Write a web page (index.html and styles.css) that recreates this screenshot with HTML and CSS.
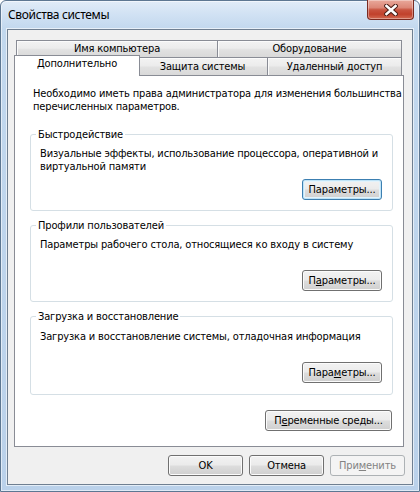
FILE: index.html
```html
<!DOCTYPE html>
<html lang="ru">
<head>
<meta charset="utf-8">
<title>Свойства системы</title>
<link rel="stylesheet" href="styles.css">
</head>
<body>
<div class="window">
  <div class="titlebar">
    <span class="title">Свойства системы</span>
    <button class="close" aria-label="Закрыть">
      <svg width="14" height="12" viewBox="0 0 14 12">
        <path d="M2.5 2 L11.5 10 M11.5 2 L2.5 10" stroke="#4a1d16" stroke-width="4.6" stroke-linecap="square" fill="none"/>
        <path d="M2.5 2 L11.5 10 M11.5 2 L2.5 10" stroke="#ffffff" stroke-width="2.6" stroke-linecap="square" fill="none"/>
      </svg>
    </button>
  </div>
  <div class="client">
    <div class="tabs">
      <div class="tabrow back">
        <div class="tab t1">Имя компьютера</div>
        <div class="tab t2">Оборудование</div>
      </div>
      <div class="tabrow front">
        <div class="tab sel">Дополнительно</div>
        <div class="tab t4">Защита системы</div>
        <div class="tab t5">Удаленный доступ</div>
      </div>
      <div class="panel">
        <p class="intro">Необходимо иметь права администратора для изменения большинства<br>перечисленных параметров.</p>
        <fieldset class="group first">
          <legend>Быстродействие</legend>
          <p class="desc">Визуальные эффекты, использование процессора, оперативной и<br>виртуальной памяти</p>
          <div class="btnrow"><button class="btn default">Параметры...</button></div>
        </fieldset>
        <fieldset class="group">
          <legend>Профили пользователей</legend>
          <p class="desc">Параметры рабочего стола, относящиеся ко входу в систему</p>
          <div class="btnrow"><button class="btn">П<u>а</u>раметры...</button></div>
        </fieldset>
        <fieldset class="group third">
          <legend>Загрузка и восстановление</legend>
          <p class="desc">Загрузка и восстановление системы, отладочная информация</p>
          <div class="btnrow"><button class="btn">Пара<u>м</u>етры...</button></div>
        </fieldset>
        <div class="btnrow env"><button class="btn wide">П<u>е</u>ременные среды...</button></div>
      </div>
    </div>
    <div class="dlgbuttons">
      <button class="btn dlg">OK</button>
      <button class="btn dlg">Отмена</button>
      <button class="btn dlg disabled">При<u>м</u>енить</button>
    </div>
  </div>
</div>
</body>
</html>
```
FILE: styles.css
```css
* { box-sizing: border-box; }

html, body {
  margin: 0;
  width: 420px;
  height: 492px;
  overflow: hidden;
  background: #ffffff;
}

body {
  font-family: "DejaVu Sans Condensed", "DejaVu Sans", sans-serif;
  font-size: 11px;
  line-height: 13px;
  letter-spacing: -0.15px;
  color: #000;
}

.window {
  width: 420px;
  height: 492px;
  display: flex;
  flex-direction: column;
  padding: 0 6px 6px 6px;
  border: 1px solid #5d7792;
  border-radius: 6px 6px 0 0;
  background: linear-gradient(180deg, #e1ecf8 0px, #d0e1f3 14px, #c2d8ee 28px, #bad1ea 100%);
  box-shadow: inset 0 0 0 1px rgba(255,255,255,0.55);
}

.titlebar {
  height: 28px;
  display: flex;
  justify-content: space-between;
  align-items: flex-start;
  flex: none;
}

.title {
  font-family: "Noto Sans", "Open Sans", sans-serif;
  font-size: 12px;
  line-height: 16px;
  letter-spacing: -0.35px;
  margin: 6px 0 0 1px;
  color: #000;
}

.close {
  width: 47px;
  height: 20px;
  margin: -1px -1px 0 0;
  padding: 0;
  display: flex;
  align-items: center;
  justify-content: center;
  border: 1px solid #7a2a20;
  border-top: none;
  border-radius: 0 0 4px 4px;
  background: linear-gradient(180deg, #e9a99b 0%, #dc8777 40%, #c8533f 52%, #c1412c 75%, #d26a52 100%);
  box-shadow: inset 0 0 0 1px rgba(255,255,255,0.35);
}

.client {
  flex: 1;
  display: flex;
  flex-direction: column;
  border: 1px solid #6f7f91;
  background: #f0f0f0;
  padding: 10px 8px 0 6px;
  box-shadow: 0 0 0 1px rgba(255,255,255,0.6);
}

.tabs {
  width: 390px;
  display: flex;
  flex-direction: column;
}

.tabrow {
  display: flex;
  align-items: flex-start;
  margin: 0 2px;
}

.tab {
  border: 1px solid #898c95;
  border-bottom: none;
  text-align: center;
  white-space: nowrap;
  background: linear-gradient(180deg, #f3f3f3 0%, #ececec 45%, #e1e1e1 55%, #d9d9d9 100%);
  box-shadow: inset 1px 1px 0 #fbfbfb;
}

.back .tab {
  height: 17px;
  line-height: 16px;
}

.t1 { width: 202px; }
.t2 { width: 185px; margin-left: -1px; }

.front { height: 18px; }

.front .tab {
  height: 18px;
  line-height: 17px;
}

.front .tab.sel {
  position: relative;
  z-index: 1;
  width: 126px;
  height: 21px;
  line-height: 16px;
  margin: -2px -2px 0 -2px;
  background: #ffffff;
  box-shadow: none;
}

.t4 { width: 131px; margin-left: -1px; }
.t5 { width: 135px; margin-left: -1px; }

.panel {
  height: 372px;
  border: 1px solid #898c95;
  background: #ffffff;
  display: flex;
  flex-direction: column;
  white-space: nowrap;
}

.intro {
  margin: 0;
  padding: 11px 0 0 18px;
}

.group {
  margin: 8px 10px 0 15px;
  padding: 6px 10px 10px 9px;
  min-width: 0;
  border: 1px solid #d5dfe5;
  border-radius: 3px;
}

.group.first { margin-top: 15px; }
.group.third { padding-top: 7px; padding-bottom: 11px; }

.group legend {
  padding: 0 2px;
  margin-left: -4px;
  line-height: 13px;
}

.desc {
  margin: 0;
  min-height: 32px;
}

.btnrow {
  display: flex;
  justify-content: flex-end;
}

.btn {
  font: inherit;
  letter-spacing: inherit;
  color: #000;
  height: 21px;
  width: 80px;
  padding: 0;
  line-height: 18px;
  text-align: center;
  white-space: nowrap;
  border: 1px solid #707070;
  border-radius: 3px;
  background: linear-gradient(180deg, #f2f2f2 0%, #ebebeb 48%, #dddddd 52%, #cfcfcf 100%);
  box-shadow: inset 0 0 0 1px #fbfbfb;
}

.btn.default {
  border-color: #3c7fb1;
  box-shadow: inset 0 0 0 1px #bfe3f7, inset 0 0 0 2px #e3f3fb;
}

.btn u { text-decoration: underline; text-underline-offset: 1px; }

.env {
  margin: 15px 11px 0 0;
}

.btn.wide { width: 127px; }

.dlgbuttons {
  display: flex;
  justify-content: flex-end;
  gap: 6px;
  margin: 8px -1px 0 0;
}

.btn.dlg { width: 75px; }

.btn.disabled {
  color: #838383;
  border-color: #adb2b5;
  background: #f4f4f4;
  box-shadow: none;
}
```
